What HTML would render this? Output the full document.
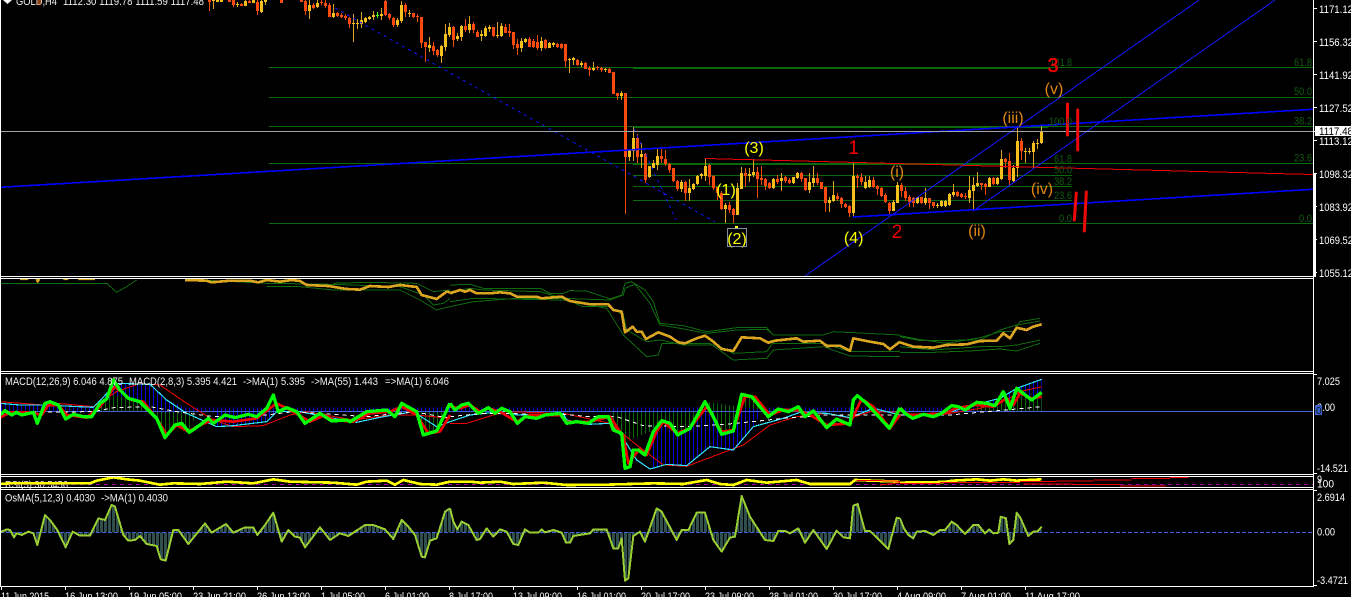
<!DOCTYPE html>
<html><head><meta charset="utf-8"><title>GOLD,H4</title>
<style>
html,body{margin:0;padding:0;background:#000;width:1351px;height:597px;overflow:hidden}
svg{display:block;font-family:"Liberation Sans",sans-serif}
polyline{shape-rendering:crispEdges}
.ax{fill:#fff;font-size:11px}
.lg{fill:#efefef;font-size:11px}
.fb{fill:#125c12;font-size:11px}
.o{fill:#e08612;font-size:16px;text-anchor:middle}
.yw{fill:#ffff00;font-size:16px;text-anchor:middle}
.rd{fill:#f00000;font-size:19px;text-anchor:middle}
</style></head><body>
<svg width="1351" height="597" viewBox="0 0 1351 597" xmlns="http://www.w3.org/2000/svg">
<defs>
<pattern id="sb" patternUnits="userSpaceOnUse" width="4" height="4"><rect x="1" width="1" height="4" fill="#0000e0"/></pattern>
<pattern id="sg" patternUnits="userSpaceOnUse" width="4" height="4"><rect x="1" width="1" height="4" fill="#0c6a0c"/></pattern>
<pattern id="ss" patternUnits="userSpaceOnUse" width="4" height="4"><rect x="0" width="3" height="4" fill="#2f4f4f"/></pattern>
<clipPath id="p1"><rect x="1" y="0" width="1312" height="276"/></clipPath>
<clipPath id="p2"><rect x="1" y="279" width="1312" height="92"/></clipPath>
<clipPath id="p3"><rect x="1" y="374" width="1312" height="100"/></clipPath>
<clipPath id="p4"><rect x="1" y="477" width="1312" height="10"/></clipPath>
<clipPath id="p5"><rect x="1" y="490" width="1312" height="96"/></clipPath>
<clipPath id="cb">
<polygon transform="translate(0,275) scale(.33333)" points="0,409 0,385 60,390 280,397 350,325 450,328 500,375 560,397 1350,397 1350,409"/>
<polygon transform="translate(0,275) scale(.33333)" points="640,409 650,455 700,452 800,440 830,409"/>
<polygon transform="translate(450,275) scale(.33333)" points="0,409 0,397 1350,397 1350,409"/>
<polygon transform="translate(450,275) scale(.33333)" points="600,409 600,582 650,568 710,572 780,515 850,525 910,455 935,409"/>
<polygon transform="translate(900,275) scale(.33333)" points="0,409 0,397 135,397 170,405 240,385 300,370 350,340 425,313 425,409"/>
</clipPath>
<clipPath id="cg">
<polygon transform="translate(0,275) scale(.33333)" points="280,409 320,372 340,360 385,370 420,380 470,430 495,488 525,450 568,472 590,409"/>
<polygon transform="translate(0,275) scale(.33333)" points="1250,409 1270,480 1310,468 1350,409"/>
<polygon transform="translate(450,275) scale(.33333)" points="480,409 490,465 515,475 525,500 600,470 635,437 683,480 720,460 745,409"/>
<polygon transform="translate(450,275) scale(.33333)" points="765,380 790,425 815,478 850,468 875,358 905,365 955,425 965,409"/>
<polygon transform="translate(900,275) scale(.33333)" points="220,409 230,382 285,392 310,350 330,400 350,340 395,375 425,352 425,409"/>
</clipPath>
<clipPath id="co">
<polygon transform="translate(0,470) scale(.33333)" points="0,187 20,178 30,180 42,202 50,190 65,195 85,185 100,190 112,225 135,135 150,150 172,180 197,232 218,185 240,197 270,197 295,145 315,150 335,105 345,110 370,195 385,212 405,210 420,198 440,222 470,228 482,268 497,272 520,180 535,180 565,222 615,160 635,188 678,162 700,188 735,172 760,172 772,195 795,165 820,128 845,215 865,180 885,200 900,203 915,232 960,172 990,210 1020,190 1045,198 1095,165 1120,165 1155,178 1180,207 1205,150 1225,170 1245,195 1265,260 1275,262 1290,212 1310,205 1335,125 1350,115 1350,187"/>
<polygon transform="translate(450,470) scale(.33333)" points="0,187 0,115 10,155 22,178 35,155 55,165 80,210 90,207 110,175 130,200 150,178 170,185 190,222 205,225 225,178 240,188 265,188 275,178 285,187 310,180 335,188 348,218 360,218 370,198 420,190 430,178 470,178 490,235 505,235 515,205 525,332 535,325 550,198 570,185 585,215 620,115 635,125 680,210 695,180 715,180 740,128 765,128 790,210 815,245 840,203 855,200 875,78 900,140 945,210 970,213 985,183 1005,183 1020,190 1045,175 1065,218 1090,180 1130,237 1160,182 1180,202 1200,205 1210,107 1223,102 1245,183 1260,183 1315,237 1340,143 1350,145 1350,187"/>
<polygon transform="translate(900,470) scale(.33333)" points="0,187 0,145 12,175 25,195 40,205 50,185 75,183 100,195 120,180 135,180 155,155 170,165 195,192 220,165 235,165 255,190 268,178 280,190 295,188 302,140 318,145 328,222 340,210 350,128 362,145 385,198 400,185 412,185 425,170 425,187"/>
</clipPath>
</defs>
<rect width="1351" height="597" fill="#000"/>

<!-- main pane -->
<g clip-path="url(#p1)">
<g stroke="#0a6a0a" stroke-width="1" shape-rendering="crispEdges" fill="none">
<path d="M269 67.5H1313M269 97.5H1313M269 126.5H1313M269 163.5H1313M269 223.5H1313"/>
<path d="M633 175.5H1072M633 186.5H1072M633 200.5H1072"/>
</g>
<path d="M633 68H1048M633 127H1048M633 164H1000" stroke="#086a08" stroke-width="2" shape-rendering="crispEdges" fill="none"/>
<!-- wicks -->
<path stroke="#f04a0a" stroke-width="1" fill="none" shape-rendering="crispEdges" d="M209.5 0V11M229.5 0V2M233.5 0V7M241.5 3V6M249.5 0V3M257.5 0V15M281.5 0V3M301.5 0V2M305.5 0V15M313.5 3V9M321.5 0V5M325.5 0V8M329.5 3V17M337.5 12V17M341.5 13V18M345.5 14V20M349.5 17V28M385.5 0V16M389.5 13V20M393.5 17V27M405.5 3V17M413.5 13V18M417.5 14V22M421.5 17V48M425.5 42V62M433.5 42V55M437.5 49V57M453.5 26V47M465.5 19V32M473.5 22V33M477.5 30V37M493.5 27V37M505.5 24V33M509.5 24V37M513.5 32V49M517.5 39V55M529.5 37V47M533.5 39V48M537.5 35V50M545.5 39V49M557.5 43V48M561.5 43V49M565.5 44V67M577.5 59V66M585.5 62V69M589.5 66V76M597.5 66V70M601.5 67V72M609.5 68V73M613.5 72V94M617.5 93V100M625.5 93V214M637.5 134V163M645.5 153V183M661.5 148V163M665.5 150V166M669.5 163V173M673.5 168V182M677.5 180V191M685.5 181V201M709.5 164V185M713.5 175V190M717.5 187V200M721.5 191V210M729.5 202V213M733.5 208V223M745.5 168V187M757.5 167V198M761.5 166V185M765.5 178V190M769.5 182V189M777.5 175V184M785.5 176V183M789.5 178V184M801.5 172V182M805.5 178V191M817.5 173V185M821.5 182V189M825.5 187V212M837.5 193V201M841.5 197V208M845.5 203V208M849.5 205V217M857.5 174V188M861.5 173V185M873.5 177V188M877.5 185V195M881.5 187V197M885.5 193V203M889.5 202V215M901.5 183V197M905.5 187V201M909.5 195V207M913.5 197V207M921.5 197V204M929.5 198V209M933.5 202V208M957.5 191V197M961.5 193V198M965.5 193V199M981.5 183V190M985.5 183V195M993.5 177V185M1005.5 158V168M1009.5 153V186M1021.5 138V160"/>
<path stroke="#d9a224" stroke-width="1" fill="none" shape-rendering="crispEdges" d="M213.5 0V9M217.5 0V2M221.5 0V2M237.5 2V7M245.5 0V6M253.5 0V3M261.5 0V13M265.5 0V5M309.5 0V19M317.5 0V8M333.5 4V18M353.5 14V42M357.5 19V29M361.5 12V28M365.5 17V23M369.5 16V20M373.5 11V20M381.5 8V20M397.5 18V27M401.5 1V23M409.5 10V17M429.5 37V52M441.5 45V63M445.5 24V51M449.5 23V37M457.5 33V41M461.5 25V41M469.5 16V33M481.5 30V41M485.5 26V37M489.5 25V32M497.5 22V38M501.5 23V37M521.5 38V52M525.5 38V43M541.5 37V51M549.5 42V48M553.5 42V47M569.5 58V73M573.5 57V65M581.5 61V67M593.5 62V71M605.5 68V72M621.5 91V100M629.5 150V161M633.5 127V161M641.5 143V168M649.5 166V178M653.5 160V168M657.5 148V170M681.5 180V192M689.5 179V201M693.5 183V190M697.5 175V185M701.5 173V179M705.5 158V181M725.5 203V223M737.5 183V215M741.5 167V189M749.5 168V182M753.5 159V177M773.5 178V189M781.5 173V191M793.5 177V184M797.5 172V179M809.5 173V193M813.5 166V187M829.5 197V212M833.5 181V202M853.5 163V216M865.5 176V189M869.5 176V188M893.5 200V211M897.5 182V203M917.5 197V204M925.5 188V205M937.5 203V208M941.5 200V207M945.5 200V207M949.5 193V206M953.5 184V197M969.5 176V203M973.5 177V211M977.5 172V187M989.5 177V187M997.5 177V185M1001.5 150V180M1013.5 165V182M1017.5 127V177M1025.5 148V163M1029.5 148V154M1033.5 141V168M1037.5 139V149M1041.5 126V144"/>
<path stroke="#44ff22" stroke-width="1" fill="none" shape-rendering="crispEdges" d="M377.5 12V18M376 15.5H379"/>
<!-- bodies -->
<path stroke="#fb4a10" stroke-width="3" fill="none" shape-rendering="crispEdges" d="M209.5 0V2M229.5 0V2M233.5 0V5M241.5 4V6M249.5 1V3M257.5 2V11M281.5 0V3M301.5 0V2M305.5 1V11M313.5 5V8M321.5 2V3M325.5 3V6M329.5 5V17M337.5 13V16M341.5 15V17M345.5 16V18M349.5 18V24M385.5 1V15M389.5 14V18M393.5 18V25M405.5 5V12M413.5 13V17M417.5 16V17M421.5 17V43M425.5 42V47M433.5 46V51M437.5 50V55M453.5 27V40M465.5 26V30M473.5 24V30M477.5 32V37M493.5 27V36M505.5 27V33M509.5 31V33M513.5 32V45M517.5 44V48M529.5 39V47M533.5 41V47M537.5 42V48M545.5 40V48M557.5 44V47M561.5 44V48M565.5 44V61M577.5 60V65M585.5 63V69M589.5 68V70M597.5 67V68M601.5 68V70M609.5 69V73M613.5 72V94M617.5 93V96M625.5 93V157M637.5 138V157M645.5 154V180M661.5 156V159M665.5 159V164M669.5 164V170M673.5 168V181M677.5 181V189M685.5 182V193M709.5 165V177M713.5 176V188M717.5 187V193M721.5 193V209M729.5 205V210M733.5 209V215M745.5 173V176M757.5 172V179M761.5 178V180M765.5 179V186M769.5 183V188M777.5 179V182M785.5 177V181M789.5 180V183M801.5 173V179M805.5 178V190M817.5 178V183M821.5 182V189M825.5 187V203M837.5 196V199M841.5 198V204M845.5 204V207M849.5 206V213M857.5 176V178M861.5 177V182M873.5 180V187M877.5 186V189M881.5 188V196M885.5 195V202M889.5 203V211M901.5 185V191M905.5 191V198M909.5 197V202M913.5 198V203M921.5 197V203M929.5 198V203M933.5 202V206M957.5 192V196M961.5 194V197M965.5 196V197M981.5 183V185M985.5 184V187M993.5 178V184M1005.5 159V162M1009.5 161V180M1021.5 141V151"/>
<path stroke="#f5bf1e" stroke-width="3" fill="none" shape-rendering="crispEdges" d="M213.5 0V1M217.5 0V2M221.5 0V2M237.5 4V5M245.5 1V6M253.5 0V3M261.5 1V12M265.5 0V2M309.5 5V11M317.5 3V7M333.5 13V17M353.5 23V24M357.5 23V24M361.5 20V24M365.5 18V22M369.5 17V19M373.5 15V17M381.5 14V16M397.5 20V25M401.5 5V21M409.5 13V14M429.5 45V48M441.5 46V56M445.5 34V47M449.5 27V35M457.5 36V39M461.5 26V37M469.5 24V30M481.5 34V36M485.5 28V36M489.5 27V29M497.5 35V36M501.5 26V36M521.5 41V48M525.5 39V42M541.5 41V48M549.5 43V48M553.5 43V45M569.5 59V60M573.5 58V60M581.5 63V65M593.5 68V70M605.5 69V70M621.5 93V96M629.5 150V157M633.5 138V151M641.5 154V157M649.5 166V177M653.5 163V168M657.5 156V165M681.5 182V189M689.5 188V193M693.5 184V189M697.5 176V184M701.5 174V176M705.5 166V176M725.5 205V209M737.5 188V215M741.5 173V189M749.5 174V176M753.5 172V175M773.5 179V188M781.5 178V181M793.5 177V183M797.5 173V178M809.5 182V190M813.5 178V183M829.5 200V203M833.5 195V201M853.5 176V213M865.5 182V188M869.5 180V187M893.5 202V211M897.5 185V203M917.5 197V203M925.5 198V203M937.5 205V206M941.5 201V206M945.5 201V206M949.5 194V205M953.5 192V195M969.5 190V198M973.5 185V191M977.5 183V186M989.5 178V187M997.5 178V184M1001.5 159V179M1013.5 168V181M1017.5 141V168M1025.5 151V152M1029.5 151V152M1033.5 143V152M1037.5 143V144M1041.5 132V143"/>
<rect x="376" y="15" width="3" height="1" fill="#44ff22"/>

<!-- dotted -->
<g fill="none" stroke="#1414ff" stroke-width="1" stroke-dasharray="3 4" shape-rendering="crispEdges">
<path d="M335 8L715 222"/>
<path d="M634 129L676 220"/>
</g>
<!-- trend lines -->
<g fill="none" stroke-width="1" shape-rendering="crispEdges">
<path d="M805 276L1199 0M973 211L1275 0" stroke="#1818ff"/>
<path d="M0 187L1313 109" stroke="#0000ff"/>
<path d="M0 187.600L1313 109.600" stroke="#0000ff"/>
<path d="M853 216.700L1313 189" stroke="#0000ff"/>
<path d="M853 217.300L1313 189.600" stroke="#0000ff"/>
<path d="M705 158.500L1313 174.500" stroke="#ee0000"/>
</g>
<path d="M0 131.5H1313" stroke="#a0a4a8" stroke-width="1" shape-rendering="crispEdges"/>
<!-- red strokes -->
<g fill="none" stroke="#ee0a0a" stroke-width="3" stroke-linecap="round">
<path d="M1067.5 104V135"/><path d="M1077.7 110V150"/>
<path d="M1076.3 193L1074.3 220"/><path d="M1086.3 192L1084.3 231"/>
</g>
</g>

<!-- fib labels -->
<g class="fb">
<text x="1294" y="66" class="fb" textLength="18" lengthAdjust="spacingAndGlyphs">61.8</text>
<text x="1294" y="95" class="fb" textLength="18" lengthAdjust="spacingAndGlyphs">50.0</text>
<text x="1294" y="124.500" class="fb" textLength="18" lengthAdjust="spacingAndGlyphs">38.2</text>
<text x="1294" y="161.500" class="fb" textLength="18" lengthAdjust="spacingAndGlyphs">23.6</text>
<text x="1299" y="222" class="fb" textLength="13" lengthAdjust="spacingAndGlyphs">0.0</text>
<text x="1050" y="66" class="fb" textLength="22" lengthAdjust="spacingAndGlyphs">161.8</text>
<text x="1049" y="125" class="fb" textLength="23" lengthAdjust="spacingAndGlyphs">100.0</text>
<text x="1054" y="162.500" class="fb" textLength="18" lengthAdjust="spacingAndGlyphs">61.8</text>
<text x="1054" y="173.500" class="fb" textLength="18" lengthAdjust="spacingAndGlyphs">50.0</text>
<text x="1054" y="185" class="fb" textLength="18" lengthAdjust="spacingAndGlyphs">38.2</text>
<text x="1054" y="199" class="fb" textLength="18" lengthAdjust="spacingAndGlyphs">23.6</text>
<text x="1059" y="222" class="fb" textLength="13" lengthAdjust="spacingAndGlyphs">0.0</text>
</g>

<!-- wave labels -->
<text class="yw" x="754" y="153">(3)</text>
<text class="yw" x="726" y="195">(1)</text>
<text class="yw" x="737" y="244">(2)</text>
<rect x="727.500" y="228.500" width="19" height="18" fill="none" stroke="#8090a0" stroke-width="1"/>
<rect x="735" y="226" width="3" height="2" fill="#ffff00"/>
<text class="yw" x="853.700" y="243">(4)</text>
<text class="rd" x="853.700" y="154">1</text>
<text class="rd" x="897" y="238">2</text>
<text class="rd" x="1053" y="72" style="font-size:20px" stroke="#f00000" stroke-width=".5">3</text>
<text class="o" x="897" y="177">(i)</text>
<text class="o" x="977" y="236">(ii)</text>
<text class="o" x="1013" y="123">(iii)</text>
<text class="o" x="1042" y="194">(iv)</text>
<text class="o" x="1054" y="94">(v)</text>

<!-- header -->
<polygon points="3,0 12,0 7.500,4" fill="#fff"/>
<text x="16" y="5" class="lg" fill="#fff" textLength="41" lengthAdjust="spacingAndGlyphs">GOLD,H4</text>
<text x="63" y="5" class="lg" textLength="141" lengthAdjust="spacingAndGlyphs">1112.30 1119.78 1111.59 1117.48</text>
<rect x="37" y="0" width="4" height="5" fill="#e06a20" opacity=".6"/>

<!-- pane 2 -->
<g clip-path="url(#p2)">
<g fill="none" stroke="#106a10" stroke-width="3" transform="translate(0,275) scale(.33333)">
<polyline points="0,25 100,25 200,25 320,25 350,52 380,35 410,15"/>
<polyline points="600,15 800,25 1000,28 1200,35 1270,60 1300,90 1330,85 1350,70"/>
<polyline points="800,35 900,35 1000,45 1200,45 1260,75 1310,105 1350,95"/>
<polyline points="1000,25 1100,22 1250,25 1300,50 1350,45"/>
</g>
<g fill="none" stroke="#106a10" stroke-width="3" transform="translate(450,275) scale(.33333)">
<polyline points="0,30 60,28 100,40 270,40 300,55 340,55 360,47 410,48 480,72 515,60 525,25 545,20 585,45 610,80 630,145 700,152 770,170 860,158 950,158 970,180 1120,180 1150,170 1350,180"/>
<polyline points="0,50 60,40 100,45 270,50 340,70 480,75 520,60 525,40 555,28 600,85 630,150 690,160 770,175 860,165 950,163 965,175"/>
<polyline points="0,95 70,80 200,70 340,70 400,95 480,95 520,120 530,165 590,200 630,195 700,210 800,210 850,235 950,230 968,205 1120,205 1200,230 1350,230"/>
<polyline points="0,80 70,70 340,75 470,100 520,180 590,245 625,240 636,205 780,205 850,255 950,250 970,225 1120,215 1200,243 1350,245"/>
</g>
<g fill="none" stroke="#106a10" stroke-width="3" transform="translate(900,275) scale(.33333)">
<polyline points="0,182 50,192 140,205 240,188 300,170 340,170 360,140 420,130"/>
<polyline points="0,185 60,197 240,195 300,165 350,150 420,138"/>
<polyline points="0,215 100,225 240,215 300,215 350,210 420,195"/>
<polyline points="0,232 100,232 210,228 300,222 350,228 420,205"/>
</g>
<g fill="none" stroke="#daa520" stroke-width="8" stroke-linejoin="round">
<polyline transform="translate(0,275) scale(.33333)" points="555,15 620,17 635,22 690,17 750,17 775,22 800,15 840,20 875,15 900,18 920,30 985,33 1040,42 1080,44 1110,33 1165,36 1200,30 1250,36 1265,60 1310,72 1340,50 1350,52"/>
<polyline transform="translate(450,275) scale(.33333)" points="0,55 15,50 30,45 45,50 60,45 80,55 120,55 150,52 180,55 200,65 260,65 275,70 335,65 360,78 420,88 475,88 490,105 515,110 525,172 548,155 560,170 575,170 588,192 625,172 660,185 685,202 705,205 740,190 765,182 790,200 815,222 850,228 875,187 930,190 955,203 975,197 1040,190 1060,200 1110,197 1130,213 1170,212 1200,227 1210,190 1260,200 1300,207 1320,223 1350,200"/>
<polyline transform="translate(900,275) scale(.33333)" points="0,202 40,215 100,218 140,210 200,208 240,198 290,197 310,175 330,190 350,158 380,165 400,155 425,148"/>
<path transform="translate(0,275) scale(.33333)" d="M60 12H85M110 12L113 20L118 12M190 12H205M235 12H285" stroke-width="7"/>
</g>
</g>

<!-- MACD pane -->
<g clip-path="url(#p3)">
<rect x="0" y="374" width="1313" height="100" fill="url(#sb)" clip-path="url(#cb)"/>
<rect x="0" y="374" width="1313" height="100" fill="url(#sg)" clip-path="url(#cg)"/>
<path d="M0 411.500H1313" stroke="#3f62dc" stroke-width="1" shape-rendering="crispEdges"/>
<g fill="none" stroke="#f00000" stroke-width="3">
<polyline transform="translate(0,275) scale(.33333)" points="0,380 130,390 170,385 280,395 350,350 420,325 480,330 560,385 640,435 700,455 790,452 870,420 920,410 1060,435 1170,420 1250,420 1350,430"/>
<polyline transform="translate(450,275) scale(.33333)" points="0,445 50,445 130,420 170,410 340,415 480,445 560,510 640,570 710,574 800,540 880,510 960,450 1040,425 1130,415 1200,430 1260,410 1350,412"/>
<polyline transform="translate(900,275) scale(.33333)" points="0,420 150,415 240,400 320,375 360,350 425,335"/>
</g>
<g fill="none" stroke="#33e6ff" stroke-width="3.500">
<polyline transform="translate(0,275) scale(.33333)" points="0,385 60,390 130,390 280,397 350,325 450,328 500,375 560,415 650,455 700,452 800,440 830,410 900,410 1000,430 1070,442 1150,425 1240,410 1310,455 1350,440"/>
<polyline transform="translate(450,275) scale(.33333)" points="0,440 60,420 170,408 200,420 340,415 350,435 415,448 480,445 520,490 560,555 600,582 650,568 710,572 780,515 850,525 910,455 1000,430 1050,412 1130,415 1200,428 1270,400 1350,420"/>
<polyline transform="translate(900,275) scale(.33333)" points="0,420 140,415 170,405 240,385 300,370 350,340 425,313"/>
</g>
<g fill="none" stroke="#fff" stroke-width="3" stroke-dasharray="12 12">
<polyline transform="translate(0,275) scale(.33333)" points="0,412 280,410 340,398 450,395 530,410 640,425 800,420 880,410 1100,425 1240,410 1350,430"/>
<polyline transform="translate(450,275) scale(.33333)" points="0,425 100,415 340,418 420,425 500,425 580,452 720,455 860,445 1000,430 1130,420 1350,420"/>
<polyline transform="translate(900,275) scale(.33333)" points="0,420 150,420 260,410 350,402 425,395"/>
</g>
<g fill="none" stroke="#f00000" stroke-width="8" stroke-linejoin="round">
<polyline transform="translate(0,275) scale(.33333)" points="0,428 30,412 90,412 125,420 145,390 175,390 200,420 260,428 300,395 345,335 395,375 430,380 470,430 500,480 530,450 565,470 600,450 640,435 700,440 770,430 830,385 870,405 930,440 975,420 1000,435 1060,440 1110,415 1170,410 1205,395 1250,420 1285,475 1320,470 1350,420"/>
<polyline transform="translate(450,275) scale(.33333)" points="0,395 30,400 60,390 90,410 115,400 150,410 200,440 240,420 280,420 330,420 350,440 420,440 480,425 510,470 520,480 535,565 570,520 590,540 620,470 640,440 680,475 720,460 770,395 815,470 850,465 885,365 915,365 960,420 1000,405 1045,405 1080,420 1130,450 1200,445 1235,372 1270,395 1320,460 1350,420"/>
<polyline transform="translate(900,275) scale(.33333)" points="0,405 30,420 140,415 165,400 230,390 280,395 320,370 340,390 360,355 395,370 425,365"/>
</g>
<g fill="none" stroke="#00ff00" stroke-width="10" stroke-linejoin="round">
<polyline transform="translate(0,275) scale(.33333)" points="0,420 15,407 35,420 50,412 65,420 100,412 112,445 135,385 150,380 175,390 197,432 220,418 250,425 275,425 300,385 320,372 340,315 360,345 385,370 420,380 470,430 495,488 525,450 545,445 568,472 600,450 625,430 640,445 675,420 705,428 745,418 770,425 800,400 820,360 835,410 860,398 890,410 915,445 960,415 995,438 1040,435 1050,440 1100,410 1160,405 1185,425 1205,385 1250,410 1270,480 1310,468 1350,385"/>
<polyline transform="translate(450,275) scale(.33333)" points="0,385 15,405 35,390 55,385 85,415 115,398 135,415 155,400 180,410 202,445 225,425 260,430 285,420 330,415 350,445 380,440 415,445 445,425 475,425 490,465 515,475 525,580 540,575 550,525 565,525 585,540 610,470 635,437 660,445 683,480 720,460 765,380 790,425 815,478 850,468 875,358 905,365 955,425 985,402 1015,410 1045,395 1065,425 1090,408 1130,458 1160,432 1200,450 1210,375 1222,362 1250,385 1318,460 1350,398"/>
<polyline transform="translate(900,275) scale(.33333)" points="0,400 15,415 38,430 70,418 100,425 125,415 155,392 175,395 195,405 230,382 260,385 285,392 310,350 330,400 350,340 395,375 425,352"/>
</g>
</g>
<g class="lg">
<text x="5" y="385" class="lg" textLength="118" lengthAdjust="spacingAndGlyphs">MACD(12,26,9) 6.046 4.875</text>
<text x="129" y="385" class="lg" textLength="108" lengthAdjust="spacingAndGlyphs">MACD(2,8,3) 5.395 4.421</text>
<text x="243" y="385" class="lg" textLength="62" lengthAdjust="spacingAndGlyphs">-&gt;MA(1) 5.395</text>
<text x="311" y="385" class="lg" textLength="67" lengthAdjust="spacingAndGlyphs">-&gt;MA(55) 1.443</text>
<text x="385" y="385" class="lg" textLength="64" lengthAdjust="spacingAndGlyphs">=&gt;MA(1) 6.046</text>
</g>

<!-- RSI pane -->
<text x="5" y="488" class="lg" style="font-size:10px" textLength="63" lengthAdjust="spacingAndGlyphs">RSI(5) 30.5456</text>
<g clip-path="url(#p4)">
<path d="M0 484.500H1313" stroke="#a000a0" stroke-width="1" stroke-dasharray="4 4" shape-rendering="crispEdges"/>
<g fill="none" stroke="#ffff00" stroke-width="8">
<polyline transform="translate(0,470) scale(.33333)" points="0,42 30,40 90,40 200,40 270,40 290,32 340,22 380,28 420,32 480,44 520,40 600,42 680,35 760,40 820,28 870,35 1000,38 1070,44 1100,35 1160,32 1185,44 1210,30 1260,42 1310,44 1350,35"/>
<polyline transform="translate(450,470) scale(.33333)" points="0,35 60,35 90,38 150,35 190,42 280,38 350,45 470,44 540,42 610,40 700,42 770,30 810,42 850,45 890,30 950,38 1040,30 1080,42 1200,42 1215,30 1350,35"/>
<polyline transform="translate(900,470) scale(.33333)" points="0,38 130,36 160,32 230,28 270,32 310,28 350,32 425,28"/>
</g>
<g fill="none" stroke="#f00000" stroke-width="3" shape-rendering="crispEdges">
<path transform="translate(450,470) scale(.33333)" d="M1220 32H1290L1350 34M1290 45L1350 38"/>
<path transform="translate(900,470) scale(.33333)" d="M0 40H120M120 38H360M360 35H470M470 33H580M580 30H695M695 25H810M810 22H865M370 42H520M520 44H660M660 48H800"/>
</g>
</g>

<!-- OsMA pane -->
<g clip-path="url(#p5)">
<rect x="0" y="490" width="1313" height="96" fill="url(#ss)" clip-path="url(#co)"/>
<path d="M0 532.500H1313" stroke="#3f62dc" stroke-width="1" stroke-dasharray="4 2" shape-rendering="crispEdges"/>
<g fill="none" stroke="#9acd32" stroke-width="6" stroke-linejoin="round">
<polyline transform="translate(0,470) scale(.33333)" points="0,187 20,178 30,180 42,202 50,190 65,195 85,185 100,190 112,225 135,135 150,150 172,180 197,232 218,185 240,197 270,197 295,145 315,150 335,105 345,110 370,195 385,212 405,210 420,198 440,222 470,228 482,268 497,272 520,180 535,180 565,222 615,160 635,188 678,162 700,188 735,172 760,172 772,195 795,165 820,128 845,215 865,180 885,200 900,203 915,232 960,172 990,210 1020,190 1045,198 1095,165 1120,165 1155,178 1180,207 1205,150 1225,170 1245,195 1265,260 1275,262 1290,212 1310,205 1335,125 1350,115"/>
<polyline transform="translate(450,470) scale(.33333)" points="0,115 10,155 22,178 35,155 55,165 80,210 90,207 110,175 130,200 150,178 170,185 190,222 205,225 225,178 240,188 265,188 275,178 285,187 310,180 335,188 348,218 360,218 370,198 420,190 430,178 470,178 490,235 505,235 515,205 525,332 535,325 550,198 570,185 585,215 620,115 635,125 680,210 695,180 715,180 740,128 765,128 790,210 815,245 840,203 855,200 875,78 900,140 945,210 970,213 985,183 1005,183 1020,190 1045,175 1065,218 1090,180 1130,237 1160,182 1180,202 1200,205 1210,107 1223,102 1245,183 1260,183 1315,237 1340,143 1350,145"/>
<polyline transform="translate(900,470) scale(.33333)" points="0,145 12,175 25,195 40,205 50,185 75,183 100,195 120,180 135,180 155,155 170,165 195,192 220,165 235,165 255,190 268,178 280,190 295,188 302,140 318,145 328,222 340,210 350,128 362,145 385,198 400,185 412,185 425,170"/>
</g>
</g>
<text x="5" y="501.500" class="lg" textLength="90" lengthAdjust="spacingAndGlyphs">OsMA(5,12,3) 0.4030</text>
<text x="101" y="501.500" class="lg" textLength="67" lengthAdjust="spacingAndGlyphs">-&gt;MA(1) 0.4030</text>

<!-- frame -->
<g fill="#fff" shape-rendering="crispEdges">
<rect x="0" y="0" width="1" height="587"/>
<rect x="1313" y="0" width="1" height="587"/>
<rect x="1313" y="174" width="3" height="103"/>
<rect x="0" y="276" width="1314" height="1"/>
<rect x="0" y="278" width="1314" height="1"/>
<rect x="0" y="371" width="1314" height="1"/>
<rect x="0" y="373" width="1314" height="1"/>
<rect x="0" y="474" width="1314" height="1"/>
<rect x="0" y="476" width="1314" height="1"/>
<rect x="0" y="487" width="1314" height="1"/>
<rect x="0" y="489" width="1314" height="1"/>
<rect x="0" y="586" width="1314" height="1"/>
<path d="M1314 8h3v1h-3zM1314 41h3v1h-3zM1314 74h3v1h-3zM1314 107h3v1h-3zM1314 140h3v1h-3zM1314 173h3v1h-3zM1314 206h3v1h-3zM1314 239h3v1h-3zM1314 272h3v1h-3zM1314 374h3v1h-3zM1314 473h3v1h-3zM1314 490h3v1h-3zM1314 585h3v1h-3z"/>
<path d="M1 587h1v3h-1zM65 587h1v3h-1zM129 587h1v3h-1zM193 587h1v3h-1zM257 587h1v3h-1zM321 587h1v3h-1zM385 587h1v3h-1zM449 587h1v3h-1zM513 587h1v3h-1zM577 587h1v3h-1zM641 587h1v3h-1zM705 587h1v3h-1zM769 587h1v3h-1zM833 587h1v3h-1zM897 587h1v3h-1zM961 587h1v3h-1zM1025 587h1v3h-1z"/>
</g>

<!-- price axis labels -->
<g>
<text class="ax" x="1319" y="13" textLength="34" lengthAdjust="spacingAndGlyphs">1171.12</text>
<text class="ax" x="1319" y="46" textLength="34" lengthAdjust="spacingAndGlyphs">1156.32</text>
<text class="ax" x="1319" y="79" textLength="34" lengthAdjust="spacingAndGlyphs">1141.92</text>
<text class="ax" x="1319" y="112" textLength="34" lengthAdjust="spacingAndGlyphs">1127.52</text>
<text class="ax" x="1319" y="145" textLength="34" lengthAdjust="spacingAndGlyphs">1113.12</text>
<text class="ax" x="1319" y="178" textLength="34" lengthAdjust="spacingAndGlyphs">1098.32</text>
<text class="ax" x="1319" y="211" textLength="34" lengthAdjust="spacingAndGlyphs">1083.92</text>
<text class="ax" x="1319" y="244" textLength="34" lengthAdjust="spacingAndGlyphs">1069.52</text>
<text class="ax" x="1319" y="277" textLength="34" lengthAdjust="spacingAndGlyphs">1055.12</text>
<rect x="1315" y="126" width="36" height="10" fill="#fff"/>
<path d="M1314 131.500h3" stroke="#fff"/>
<text x="1319" y="135" style="font-size:11px;fill:#000" textLength="34" lengthAdjust="spacingAndGlyphs">1117.48</text>
<text class="ax" x="1317" y="385" textLength="23" lengthAdjust="spacingAndGlyphs">7.025</text>
<text class="ax" x="1317" y="411" textLength="18" lengthAdjust="spacingAndGlyphs">0.00</text>
<rect x="1315" y="405" width="7" height="10" fill="#3a5fc8"/>
<text x="1316" y="414" style="font-size:10px;fill:#101820">0</text>
<text class="ax" x="1317" y="472" textLength="31" lengthAdjust="spacingAndGlyphs">-14.521</text>
<text class="ax" x="1317" y="483" textLength="5" lengthAdjust="spacingAndGlyphs">9</text>
<text class="ax" x="1317" y="487.500" textLength="17" lengthAdjust="spacingAndGlyphs">100</text>
<text class="ax" x="1317" y="501" textLength="28" lengthAdjust="spacingAndGlyphs">2.6914</text>
<text class="ax" x="1317" y="535.500" textLength="18" lengthAdjust="spacingAndGlyphs">0.00</text>
<text class="ax" x="1317" y="584" textLength="31" lengthAdjust="spacingAndGlyphs">-3.4721</text>
</g>

<!-- date axis -->
<g>
<text class="ax" x="1" y="600" textLength="48" lengthAdjust="spacingAndGlyphs">11 Jun 2015</text>
<text class="ax" x="65" y="600" textLength="53" lengthAdjust="spacingAndGlyphs">16 Jun 13:00</text>
<text class="ax" x="129" y="600" textLength="53" lengthAdjust="spacingAndGlyphs">19 Jun 05:00</text>
<text class="ax" x="193" y="600" textLength="53" lengthAdjust="spacingAndGlyphs">23 Jun 21:00</text>
<text class="ax" x="257" y="600" textLength="53" lengthAdjust="spacingAndGlyphs">26 Jun 13:00</text>
<text class="ax" x="321" y="600" textLength="44" lengthAdjust="spacingAndGlyphs">1 Jul 05:00</text>
<text class="ax" x="385" y="600" textLength="44" lengthAdjust="spacingAndGlyphs">6 Jul 01:00</text>
<text class="ax" x="449" y="600" textLength="44" lengthAdjust="spacingAndGlyphs">8 Jul 17:00</text>
<text class="ax" x="513" y="600" textLength="49" lengthAdjust="spacingAndGlyphs">13 Jul 09:00</text>
<text class="ax" x="577" y="600" textLength="49" lengthAdjust="spacingAndGlyphs">16 Jul 01:00</text>
<text class="ax" x="641" y="600" textLength="49" lengthAdjust="spacingAndGlyphs">20 Jul 17:00</text>
<text class="ax" x="705" y="600" textLength="49" lengthAdjust="spacingAndGlyphs">23 Jul 09:00</text>
<text class="ax" x="769" y="600" textLength="49" lengthAdjust="spacingAndGlyphs">28 Jul 01:00</text>
<text class="ax" x="833" y="600" textLength="49" lengthAdjust="spacingAndGlyphs">30 Jul 17:00</text>
<text class="ax" x="897" y="600" textLength="49" lengthAdjust="spacingAndGlyphs">4 Aug 09:00</text>
<text class="ax" x="961" y="600" textLength="50" lengthAdjust="spacingAndGlyphs">7 Aug 01:00</text>
<text class="ax" x="1025" y="600" textLength="55" lengthAdjust="spacingAndGlyphs">11 Aug 17:00</text>
</g>
</svg>
</body></html>
